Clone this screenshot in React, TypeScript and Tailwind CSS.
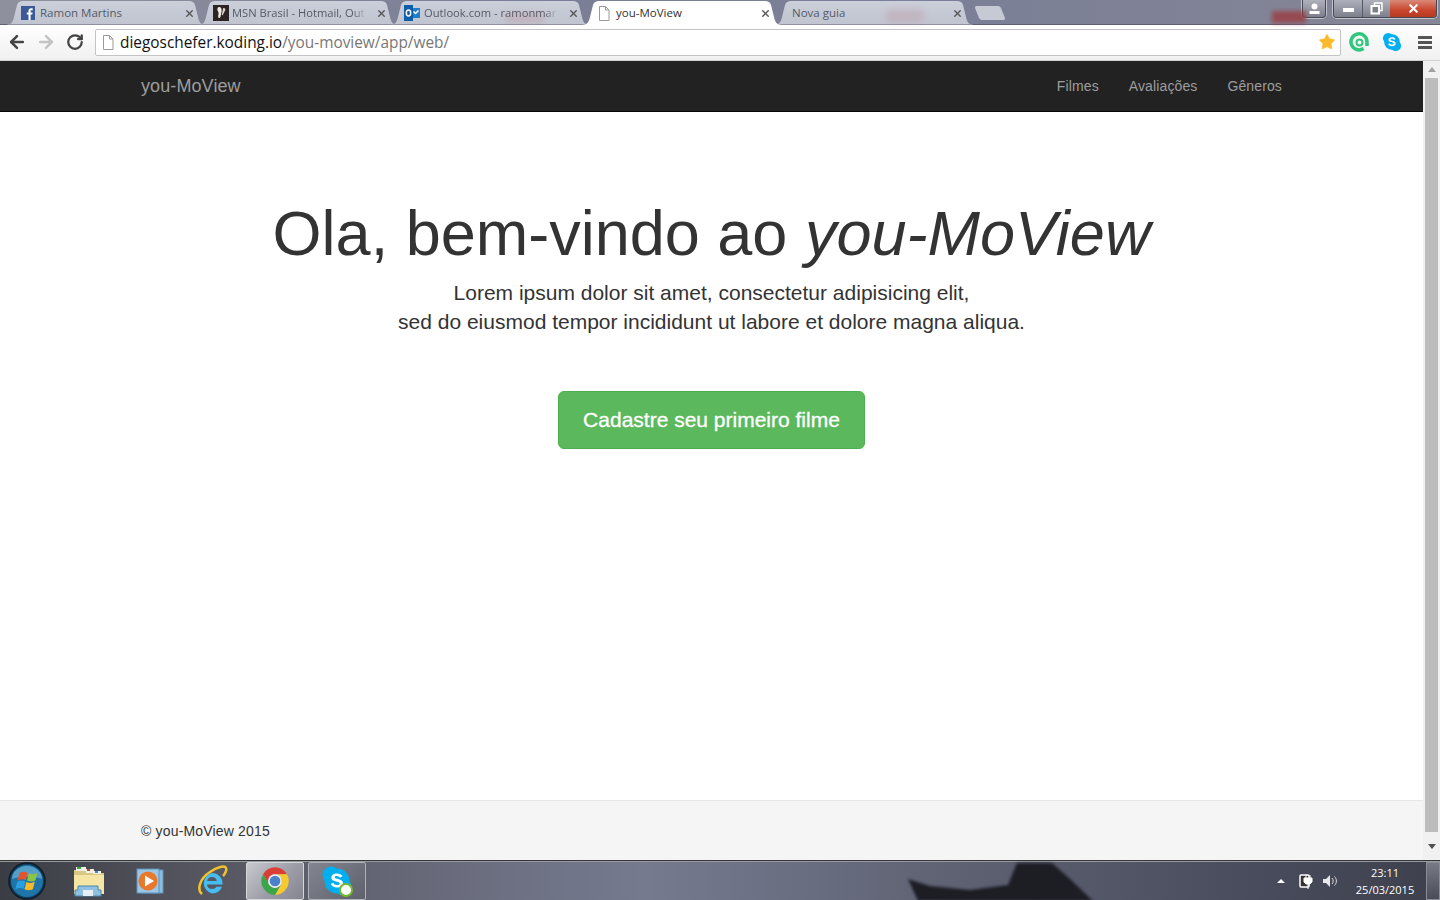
import React from "react";
import { ArrowLeft, ArrowRight, RotateCw, X, Star } from "lucide-react";

const uiFont = "[font-family:'Open_Sans','Noto_Sans',sans-serif]";

const PageIcon = () => (
  <svg width="12" height="15" viewBox="0 0 12 15" className="shrink-0">
    <path d="M1.5.5h6l3.5 3.5v10.5h-9.5z" fill="#fff" stroke="#9a9a9a" />
    <path d="M7.5.5v3.5h3.5" fill="none" stroke="#9a9a9a" />
  </svg>
);

const FacebookIcon = () => (
  <svg width="14" height="14" viewBox="0 0 14 14" className="shrink-0">
    <rect width="14" height="14" fill="#3b5998" />
    <path d="M9.6 14V8.6h1.7l.3-2.1h-2V5.2c0-.6.2-1 1-1h1.1V2.3c-.2 0-.8-.1-1.6-.1-1.6 0-2.6 1-2.6 2.7v1.6H5.8v2.1h1.7V14z" fill="#fff" />
  </svg>
);

const MsnIcon = () => (
  <svg width="16" height="16" viewBox="0 0 16 16" className="shrink-0">
    <rect width="16" height="16" fill="#2b2422" />
    <path d="M6 2c2 0 3 2 2.6 4.4L7.4 12c-.3 1.300-2 1.400-2.200.1C5 10 6.400 8 5 6.200 4 5 4.200 2 6 2z" fill="#f1ece6" />
    <path d="M10.200 3c1.600-.5 2.600.8 2 2.200L9.800 10c-.4.700-1.200.3-1-.4z" fill="#d9d2ca" />
  </svg>
);

const OutlookIcon = () => (
  <svg width="16" height="16" viewBox="0 0 16 16" className="shrink-0">
    <rect x="8" y="3" width="8" height="10" fill="#1d7fc9" />
    <path d="M9.500 6.500l2 2 3-3" fill="none" stroke="#fff" strokeWidth="1.500" />
    <rect width="9" height="16" fill="#0f5ea8" />
    <ellipse cx="4.500" cy="8" rx="2.200" ry="3" fill="none" stroke="#fff" strokeWidth="1.500" />
  </svg>
);

const SkypeGlyph = ({ size, dot }: { size: number; dot?: boolean }) => (
  <svg width={size} height={size} viewBox="0 0 32 32">
    <circle cx="10" cy="10" r="8.500" fill="#00aff0" />
    <circle cx="22" cy="22" r="8.500" fill="#00aff0" />
    <circle cx="16" cy="16" r="12.500" fill="#00aff0" />
    <path d="M21.500 11c-1-1.800-3-2.600-5.500-2.600-3.200 0-5.700 1.500-5.700 4.100 0 5 8.400 3.200 8.400 6 0 1-1.100 1.600-2.700 1.600-2 0-3-1-3.700-2.300l-2.500 1.300c1 2.200 3.200 3.500 6.200 3.500 3.500 0 6-1.600 6-4.400 0-5-8.400-3.500-8.400-5.900 0-.9 1-1.400 2.300-1.400 1.600 0 2.500.7 3.200 1.900z" fill="#fff" />
    {dot && <circle cx="25" cy="25" r="6" fill="#fff" stroke="#76b82a" strokeWidth="2" />}
  </svg>
);

const ChromeLogo = () => (
  <svg width="30" height="30" viewBox="0 0 48 48">
    <path d="M4.950 13A22 22 0 0 1 43.050 13H24A11 11 0 0 0 14.470 29.500z" fill="#d93f36" />
    <path d="M43.050 13A22 22 0 0 1 24 46L33.530 29.500A11 11 0 0 0 24 13z" fill="#f6c92f" />
    <path d="M24 46A22 22 0 0 1 4.950 13L14.470 29.500A11 11 0 0 0 33.530 29.500z" fill="#3ba54a" />
    <circle cx="24" cy="24" r="11" fill="#f1f1f1" />
    <circle cx="24" cy="24" r="8.500" fill="#4a80c9" />
  </svg>
);

const StartOrb = () => (
  <svg width="38" height="38" viewBox="0 0 38 38">
    <circle cx="19" cy="19" r="18" fill="#123d5c" stroke="#0d1c28" strokeWidth="1.500" />
    <circle cx="19" cy="19" r="16" fill="#1f74a8" />
    <path d="M4 17a15 13 0 0 1 30 0c-8-3-22-3-30 0z" fill="#8cc8e4" opacity=".5" />
    <g transform="translate(19 19) scale(1.250) translate(-17 -19)">
      <path d="M11 12.500c2.500-1.200 4.500-1 6.500-.2l-1.500 6c-2-.8-4-1-6.500.2z" fill="#e5532d" />
      <path d="M18.500 12.700c2.300 1 4.300 1.200 6.700-.1l-1.500 6c-2.400 1.200-4.400 1-6.700 0z" fill="#8cc63f" />
      <path d="M9.200 19.500c2.500-1.200 4.500-1 6.500-.2l-1.500 6c-2-.8-4-1-6.500.2z" fill="#2a9fe0" />
      <path d="M16.500 19.700c2.300 1 4.300 1.200 6.700-.1l-1.500 6c-2.400 1.200-4.400 1-6.700 0z" fill="#f8b92c" />
    </g>
  </svg>
);

const FolderIcon = () => (
  <svg width="34" height="32" viewBox="0 0 34 32">
    <path d="M2 5h13l2 3h15v21H2z" fill="#d9c884" />
    <rect x="4" y="2" width="10" height="4" fill="#f4f1e4" />
    <rect x="5" y="2" width="4" height="2" fill="#36a94b" />
    <rect x="14" y="4" width="8" height="4" fill="#f4f1e4" />
    <rect x="15" y="4" width="3" height="2" fill="#c94437" />
    <rect x="21" y="6" width="8" height="3" fill="#f4f1e4" />
    <rect x="23" y="6" width="3" height="2" fill="#3d86d0" />
    <path d="M2 10h30v19H2z" fill="#f5e6a6" />
    <path d="M6 21h20v4h3v6H3v-6h3z" fill="#8fc1e2" stroke="#4d86ab" />
    <rect x="11" y="25" width="10" height="6" fill="#e7eff5" />
  </svg>
);

const MediaPlayerIcon = () => (
  <svg width="28" height="26" viewBox="0 0 28 26">
    <rect x="4" y="2" width="23" height="23" fill="#8dbde0" stroke="#5c93bb" />
    <rect x="1" y="1" width="22" height="24" fill="#9cc6e3" stroke="#5c93bb" />
    <circle cx="12" cy="13" r="9.500" fill="#e8792b" />
    <path d="M9 7.500l9 5.500-9 5.500z" fill="#fff" />
  </svg>
);

const IeIcon = () => (
  <svg width="32" height="32" viewBox="0 0 32 32">
    <path d="M6 29C1 25 3 14 14 7 21 2 29 0 30 3c1 2-1 6-3 8" fill="none" stroke="#f0c22e" strokeWidth="2.500" />
    <path d="M16 8a10.500 10.500 0 0 1 10.500 11.500H11c.3 3 2.500 4.500 5 4.500 2 0 3.500-.8 4.500-2.200h5.500C24.500 26 20.500 28.500 16 28.500a10.500 10.500 0 0 1 0-20.500zm-4.800 8h9.600c-.3-2.400-2.200-4-4.800-4s-4.500 1.600-4.800 4z" fill="#45bdf0" fillRule="evenodd" />
  </svg>
);

const tabs = [
  { title: "Ramon Martins", icon: <FacebookIcon />, cls: "gap-[5px] pl-[15px]" },
  { title: "MSN Brasil - Hotmail, Out", icon: <MsnIcon />, cls: "gap-[3px] pl-[15px]" },
  { title: "Outlook.com - ramonmar", icon: <OutlookIcon />, cls: "gap-[4px] pl-[14px]" },
  { title: "you-MoView", icon: <PageIcon />, cls: "gap-[6px] pl-[16px]", active: true },
  { title: "Nova guia", cls: "gap-0 pl-[18px]" },
];

const Tab = ({ title, icon, cls, active }: { title: string; icon?: React.ReactNode; cls: string; active?: boolean }) => (
  <div
    className={`relative -mr-[8px] flex h-[24px] w-[200px] items-center ${cls} pr-[11px] [clip-path:path('M0_24C6_24_7_20_8_16L11_4C12_1_14_0_17_0L183_0C186_0_188_1_189_4L192_16C193_20_194_24_200_24Z')] ${
      active ? "z-10 bg-white text-[#333]" : "bg-[linear-gradient(#cbcfd9,#c0c4d0)] text-[#555a66] shadow-[inset_0_-1px_0_#8f929e]"
    }`}
  >
    {icon}
    <span
      className={`min-w-0 flex-1 whitespace-nowrap ${
        title.length > 20 ? "text-[11.2px] [mask-image:linear-gradient(to_left,transparent,black_14px)]" : "text-[11.5px]"
      }`}
    >
      {title}
    </span>
    <X size={11} strokeWidth={3} className="ml-[6px] shrink-0 text-[#555]" />
  </div>
);

export default function App() {
  return (
    <div className="flex h-[900px] w-[1440px] flex-col overflow-hidden bg-white [font-family:'Liberation_Sans',Arial,sans-serif]">
      {/* tab strip, window wallpaper shows behind it */}
      <div className={`relative flex h-[25px] shrink-0 items-end bg-[linear-gradient(90deg,#8f909e,#7a7f95_35%,#7c8096_70%,#858696)] pl-[6px] shadow-[inset_0_-1px_0_#5e6070] ${uiFont}`}>
        {tabs.map((t) => (
          <Tab key={t.title} {...t} />
        ))}
        <div className="mb-[5px] ml-[9px] h-[14px] w-[30px] bg-[#c6cad5] [clip-path:path('M0_2C0_0_1_0_2_0L23_0C25_0_25_1_26_2L30_12C30_14_29_14_28_14L7_14C5_14_5_13_4_12Z')]" />
        <div className="absolute left-[1272px] top-[11px] h-[12px] w-[34px] bg-[#9c3c40] opacity-80 blur-[2px]" />
        <div className="absolute left-[885px] top-[9px] z-20 h-[14px] w-[40px] rounded-full bg-[#b0505a] opacity-15 blur-[3px]" />
        <div className="absolute left-[505px] top-[13px] z-20 h-[10px] w-[40px] rounded-full bg-[#b0505a] opacity-15 blur-[3px]" />

        <div className="ml-auto mr-[3px] flex self-start">
          <div className="mr-[7px] flex h-[18px] w-[24px] items-center justify-center rounded-b-[4px] border border-t-0 border-[#444a55] bg-[linear-gradient(#aeb1bb,#7d808c)] shadow-[0_0_0_1px_rgba(255,255,255,.5)]">
            <svg width="13" height="12" viewBox="0 0 13 12">
              <circle cx="6.500" cy="3.500" r="3" fill="#fff" />
              <rect x="1.500" y="8" width="10" height="3" fill="#fff" />
            </svg>
          </div>
          <div className="flex h-[18px] overflow-hidden rounded-b-[4px] border border-t-0 border-[#444a55] shadow-[0_0_0_1px_rgba(255,255,255,.5)]">
            <div className="flex w-[29px] items-center justify-center border-r border-[#555a66] bg-[linear-gradient(#aeb1bb,#7d808c)]">
              <span className="mt-[3px] h-[4px] w-[11px] bg-white" />
            </div>
            <div className="flex w-[27px] items-center justify-center bg-[linear-gradient(#aeb1bb,#7d808c)]">
              <svg width="13" height="13" viewBox="0 0 13 13">
                <rect x="4.500" y="1" width="7.500" height="7.500" fill="none" stroke="#fff" strokeWidth="1.500" />
                <rect x="1.500" y="4" width="7.500" height="7.500" fill="#7d808c" stroke="#fff" strokeWidth="2" />
              </svg>
            </div>
            <div className="flex w-[46px] items-center justify-center bg-[linear-gradient(#d98a78,#c8452c_60%,#b53a22)]">
              <X size={13} strokeWidth={4} className="text-white" />
            </div>
          </div>
        </div>
      </div>

      {/* browser toolbar */}
      <div className="flex h-[36px] shrink-0 items-center border-b border-[#d0d0d0] bg-[linear-gradient(#ffffff,#f0f0f0)] pb-[1px]">
        <div className="flex w-[95px] items-center gap-[9px] pl-[7px]">
          <ArrowLeft size={20} strokeWidth={3} className="text-[#444]" />
          <ArrowRight size={20} strokeWidth={3} className="text-[#c4c4c4]" />
          <RotateCw size={18} strokeWidth={3} className="ml-[1px] text-[#444]" />
        </div>
        <div className="flex h-[27px] w-[1246px] items-center rounded-[2px] border border-[#c4c4c4] bg-white pl-[6px] pr-[4px]">
          <PageIcon />
          <span className={`ml-[6px] flex-1 whitespace-nowrap pt-[2px] text-[15.4px] text-[#777] ${uiFont}`}>
            <span className="text-[#111]">diegoschefer.koding.io</span>/you-moview/app/web/
          </span>
          <Star size={18} fill="#fdb92c" strokeWidth={1} className="text-[#fdb92c]" />
        </div>
        <div className="flex flex-1 items-center pl-[8px]">
          <svg width="20" height="20" viewBox="0 0 20 20">
            <path d="M14.500 16.500A8 8 0 1 1 18 10v4" fill="none" stroke="#2fc77c" strokeWidth="3.500" />
            <circle cx="10.500" cy="10.500" r="3" fill="none" stroke="#2fc77c" strokeWidth="2" />
          </svg>
          <div className="ml-[13px] flex"><SkypeGlyph size={20} /></div>
          <div className="ml-[16px] flex w-[14px] flex-col gap-[2px]">
            <span className="h-[3px] bg-[#555]" />
            <span className="h-[3px] bg-[#555]" />
            <span className="h-[3px] bg-[#555]" />
          </div>
        </div>
      </div>

      {/* page and its scrollbar */}
      <div className="flex min-h-0 flex-1">
        <div className="flex min-w-0 flex-1 flex-col">
          <nav className="flex h-[51px] shrink-0 items-center justify-between border-b border-[#080808] bg-[#222] pl-[141px] pr-[141px]">
            <span className="text-[18px] tracking-[0.1px] text-[#9d9d9d]">you-MoView</span>
            <div className="flex gap-[30px] text-[14px] tracking-[0.12px] text-[#9d9d9d]">
              <span>Filmes</span>
              <span>Avaliações</span>
              <span>Gêneros</span>
            </div>
          </nav>
          <main className="flex flex-1 flex-col items-center pt-[83px] text-[#333]">
            <h1 className="text-[63px] leading-[76px]">
              Ola, bem-vindo ao <em>you-MoView</em>
            </h1>
            <p className="mt-[7px] text-center text-[21px] leading-[29px]">
              Lorem ipsum dolor sit amet, consectetur adipisicing elit,
              <br />
              sed do eiusmod tempor incididunt ut labore et dolore magna aliqua.
            </p>
            <button className="mt-[55px] h-[58px] w-[307px] rounded-[6px] border border-[#4cae4c] bg-[#5cb85c] text-[21px] text-white [-webkit-text-stroke:0.3px_white]">
              Cadastre seu primeiro filme
            </button>
          </main>
          <footer className="flex h-[60px] shrink-0 items-center border-t border-[#e7e7e7] bg-[#f5f5f5] pl-[141px] pt-[2px] text-[14px] tracking-[0.17px] text-[#333]">
            © you-MoView 2015
          </footer>
        </div>
        <div className="flex w-[17px] shrink-0 flex-col items-center bg-[#f1f1f1]">
          <div className="flex h-[17px] w-full items-center justify-center">
            <span className="h-0 w-0 border-x-[4px] border-b-[5px] border-x-transparent border-b-[#a3a3a3]" />
          </div>
          <div className="h-[754px] w-[13px] bg-[#bcbcbc]" />
          <div className="flex flex-1 items-center justify-center">
            <span className="h-0 w-0 border-x-[4px] border-t-[5px] border-x-transparent border-t-[#505050]" />
          </div>
        </div>
      </div>

      {/* windows taskbar */}
      <div className="relative flex h-[40px] shrink-0 items-center overflow-hidden border-t border-[#333538] bg-[linear-gradient(90deg,#3b3d45,#55565f_14%,#6d7082_35%,#757a8f_45%,#5f6374_65%,#4a4e5f_85%,#3e404c)] text-white shadow-[inset_0_1px_0_#9a9a9e]">
        <svg width="240" height="40" viewBox="0 0 240 40" className="absolute left-[880px] top-0 blur-[1.5px]">
          <path d="M28 18L50 25 90 29 128 24 137 2H172L190 18 213 40H38z" fill="#1d1d24" />
        </svg>
        <div className="relative flex h-full w-full items-center">
          <div className="ml-[8px] flex w-[38px] justify-center"><StartOrb /></div>
          <div className="ml-[26px] flex w-[34px] justify-center"><FolderIcon /></div>
          <div className="ml-[30px] flex w-[28px] justify-center"><MediaPlayerIcon /></div>
          <div className="ml-[32px] flex w-[32px] justify-center"><IeIcon /></div>
          <div className="ml-[18px] flex h-[38px] w-[58px] items-center justify-center rounded-[2px] border border-[#d5d6da] bg-[linear-gradient(135deg,#c9cad0,#9c9da6_55%,#84858f)]"><ChromeLogo /></div>
          <div className="ml-[4px] flex h-[38px] w-[58px] items-center justify-center rounded-[2px] border border-[#b0b2ba] bg-[linear-gradient(135deg,#82848f,#5f616d)]"><SkypeGlyph size={32} dot /></div>

          <div className="ml-auto flex h-full items-center">
            <span className="mr-[14px] h-0 w-0 border-x-[4px] border-b-[4px] border-x-transparent border-b-white" />
            <svg width="14" height="16" viewBox="0 0 14 16" className="mr-[9px]">
              <rect x="1" y="2" width="9" height="12" rx="1" fill="#333" stroke="#fff" strokeWidth="1.500" />
              <path d="M5 5h8v4l-2 2H7L5 9zM7 2v3M11 2v3M9 11v5" fill="#fff" stroke="#fff" />
            </svg>
            <svg width="16" height="14" viewBox="0 0 16 14" className="mr-[17px]">
              <path d="M1 5h3l4-4v12l-4-4H1z" fill="#e8e8e8" />
              <path d="M10 4c1.500 1.500 1.500 4.500 0 6M12.500 2.500c2.500 2.500 2.500 6.500 0 9" fill="none" stroke="#ddd" />
            </svg>
            <div className={`w-[60px] text-center text-[11px] leading-[17px] ${uiFont}`}>
              <div>23:11</div>
              <div className="whitespace-nowrap">25/03/2015</div>
            </div>
            <div className="ml-[11px] h-[38px] w-[14px] border border-[#8a8c96] bg-[linear-gradient(#777985,#4a4c57)]" />
          </div>
        </div>
      </div>
    </div>
  );
}
